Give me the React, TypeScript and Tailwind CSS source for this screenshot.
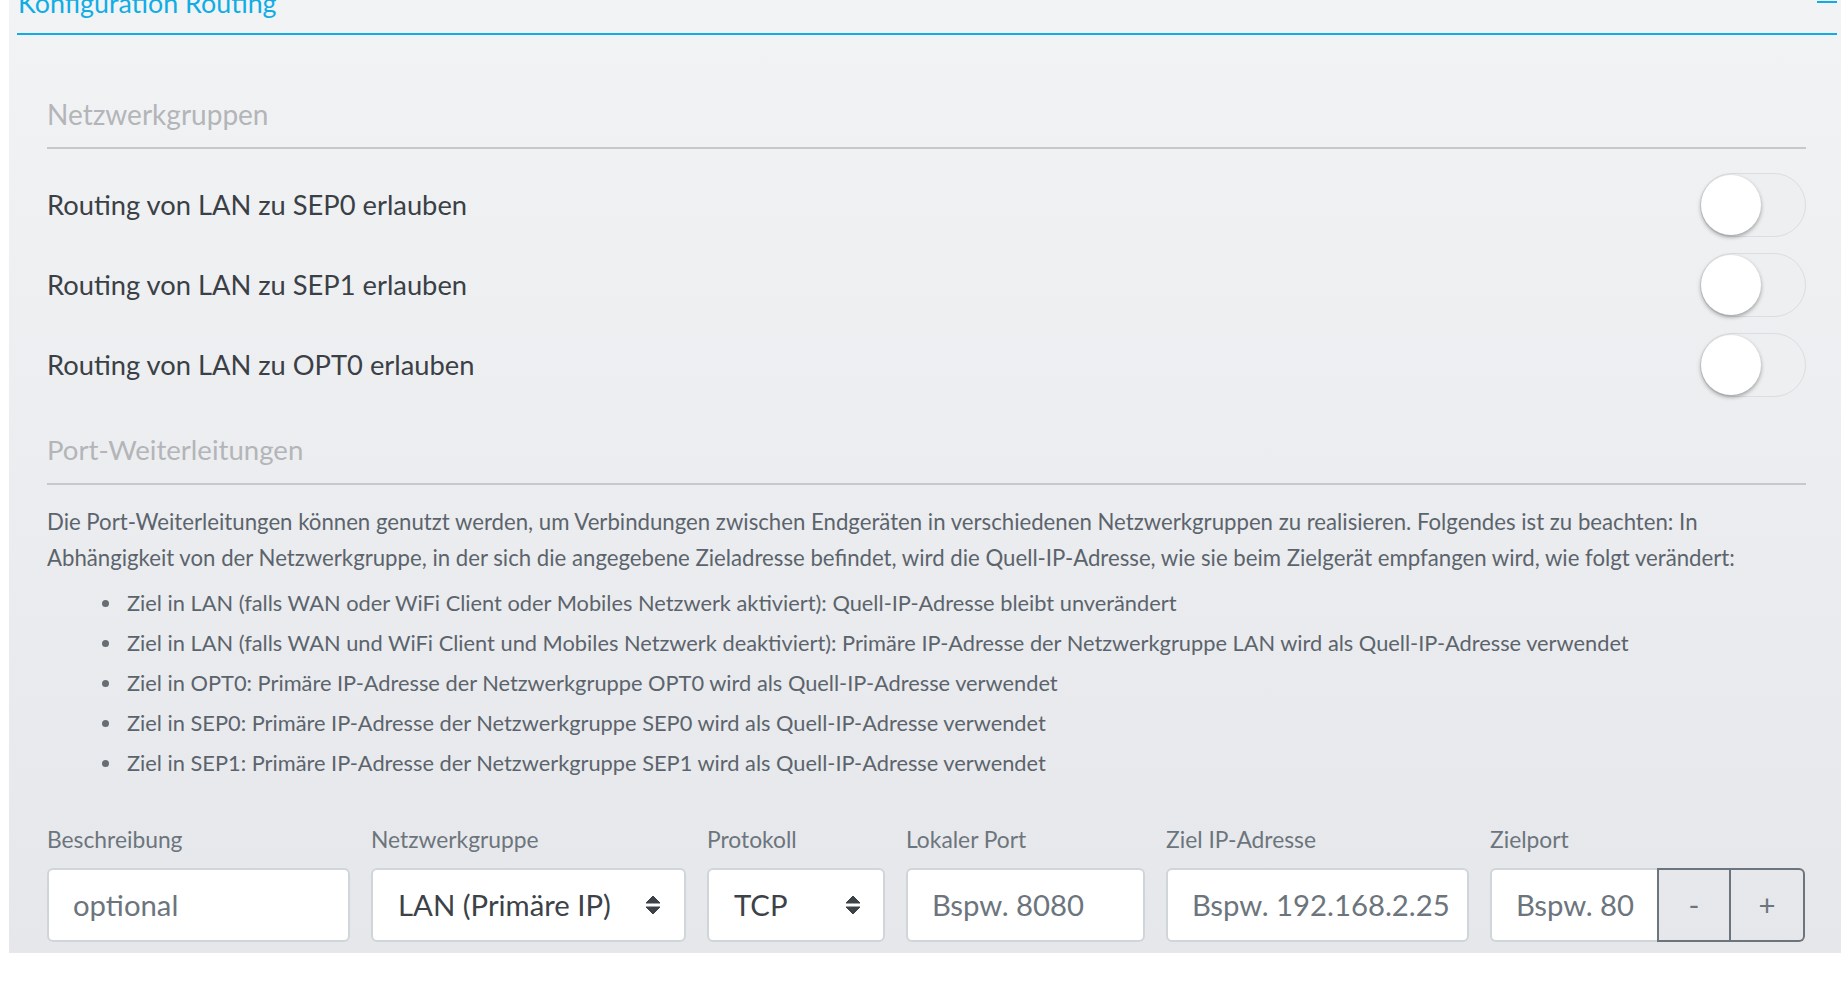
import React from "react";

function Toggle() {
  return (
    <div className="relative w-[106px] h-[64px] rounded-full border-[1.5px] border-[#dcdde0] bg-[#eeeff1] shrink-0">
      <div className="absolute left-[0px] top-[1px] w-[60px] h-[60px] rounded-full bg-white shadow-[0_2px_4px_rgba(0,0,0,0.35)]" />
    </div>
  );
}

function SelectArrows() {
  return (
    <svg width="16" height="20" viewBox="0 0 16 20" className="shrink-0">
      <path d="M1 8 L8 1 L15 8 Z" fill="#3c4247" stroke="#3c4247" strokeWidth="1" strokeLinejoin="round" />
      <path d="M1 12 L15 12 L8 19 Z" fill="#3c4247" stroke="#3c4247" strokeWidth="1" strokeLinejoin="round" />
    </svg>
  );
}

const rows = [
  "Routing von LAN zu SEP0 erlauben",
  "Routing von LAN zu SEP1 erlauben",
  "Routing von LAN zu OPT0 erlauben",
];

const bullets = [
  "Ziel in LAN (falls WAN oder WiFi Client oder Mobiles Netzwerk aktiviert): Quell-IP-Adresse bleibt unverändert",
  "Ziel in LAN (falls WAN und WiFi Client und Mobiles Netzwerk deaktiviert): Primäre IP-Adresse der Netzwerkgruppe LAN wird als Quell-IP-Adresse verwendet",
  "Ziel in OPT0: Primäre IP-Adresse der Netzwerkgruppe OPT0 wird als Quell-IP-Adresse verwendet",
  "Ziel in SEP0: Primäre IP-Adresse der Netzwerkgruppe SEP0 wird als Quell-IP-Adresse verwendet",
  "Ziel in SEP1: Primäre IP-Adresse der Netzwerkgruppe SEP1 wird als Quell-IP-Adresse verwendet",
];

export default function App() {
  return (
    <div className="w-[1841px] h-[981px] bg-white overflow-hidden font-['Lato','Noto_Sans',sans-serif]">
      <div className="ml-[9px] h-[953px] overflow-hidden bg-gradient-to-b from-[#f2f3f5] to-[#e6e7ea]">
        {/* header */}
        <div className="ml-[8px] mr-[4px] h-[35px] flex justify-between items-start border-b-2 border-[#10ade4]">
          <div className="mt-[-10px] ml-[1px] text-[26.8px] leading-[26px] text-[#10ade4] whitespace-nowrap">
            Konfiguration Routing
          </div>
          <div className="mt-[1px] w-[20px] h-[2px] bg-[#10ade4]" />
        </div>

        <div className="pl-[38px] pr-[35px]">
          {/* Netzwerkgruppen */}
          <div className="mt-[62px] pb-[16px] border-b-2 border-[#c6c8cb] text-[28px] leading-[34px] text-[#b3b5b8]">
            Netzwerkgruppen
          </div>
          <div className="mt-[24px] flex flex-col gap-[16px]">
            {rows.map((r) => (
              <div key={r} className="h-[64px] flex items-center justify-between">
                <span className="text-[27.3px] leading-[26px] text-[#3a4045]">{r}</span>
                <Toggle />
              </div>
            ))}
          </div>

          {/* Port-Weiterleitungen */}
          <div className="mt-[36px] pb-[16px] border-b-2 border-[#c6c8cb] text-[27.6px] leading-[34px] text-[#b3b5b8]">
            Port-Weiterleitungen
          </div>
          <div className="mt-[19px] text-[22.2px] leading-[36px] text-[#5b646c]">
            <div className="whitespace-nowrap">
              Die Port-Weiterleitungen können genutzt werden, um Verbindungen zwischen Endgeräten in verschiedenen Netzwerkgruppen zu realisieren. Folgendes ist zu beachten: In
            </div>
            <div className="whitespace-nowrap">
              Abhängigkeit von der Netzwerkgruppe, in der sich die angegebene Zieladresse befindet, wird die Quell-IP-Adresse, wie sie beim Zielgerät empfangen wird, wie folgt verändert:
            </div>
          </div>
          <ul className="mt-[7px] text-[21.8px] leading-[40px] text-[#5b646c]">
            {bullets.map((b) => (
              <li key={b} className="h-[40px] flex items-center whitespace-nowrap">
                <span className="ml-[55px] mr-[18px] w-[7px] h-[7px] rounded-full bg-[#676d73] shrink-0" />
                <span>{b}</span>
              </li>
            ))}
          </ul>

          {/* form row */}
          <div className="mt-[42px] grid grid-cols-[303px_315px_178px_239px_303px_315px] gap-x-[21px]">
            {["Beschreibung", "Netzwerkgruppe", "Protokoll", "Lokaler Port", "Ziel IP-Adresse", "Zielport"].map((l) => (
              <div key={l} className="text-[22.8px] leading-[28px] text-[#6c757d] whitespace-nowrap">
                {l}
              </div>
            ))}
          </div>
          <div className="mt-[15px] grid grid-cols-[303px_315px_178px_239px_303px_315px] gap-x-[21px] text-[29.3px] leading-none">
            <div className="h-[74px] rounded-[6px] border-2 border-[#d0d5da] bg-white flex items-center pl-[24px] text-[#6c757d]">
              optional
            </div>
            <div className="h-[74px] rounded-[6px] border-2 border-[#d0d5da] bg-white flex items-center justify-between pl-[25px] pr-[23px] text-[#3c4247]">
              <span>LAN (Primäre IP)</span>
              <SelectArrows />
            </div>
            <div className="h-[74px] rounded-[6px] border-2 border-[#d0d5da] bg-white flex items-center justify-between pl-[25px] pr-[22px] text-[#3c4247]">
              <span>TCP</span>
              <SelectArrows />
            </div>
            <div className="h-[74px] rounded-[6px] border-2 border-[#d0d5da] bg-white flex items-center pl-[24px] text-[#6c757d]">
              Bspw. 8080
            </div>
            <div className="h-[74px] rounded-[6px] border-2 border-[#d0d5da] bg-white flex items-center pl-[24px] text-[#6c757d] whitespace-nowrap overflow-hidden">
              Bspw. 192.168.2.25
            </div>
            <div className="h-[74px] flex">
              <div className="w-[167px] h-full rounded-l-[6px] border-2 border-r-0 border-[#d0d5da] bg-white flex items-center pl-[24px] text-[#6c757d] whitespace-nowrap">
                Bspw. 80
              </div>
              <div className="w-[74px] h-full border-2 border-[#6c757d] flex items-center justify-center text-[#6c757d]">
                -
              </div>
              <div className="w-[74px] h-full border-2 border-l-0 border-[#6c757d] rounded-r-[6px] flex items-center justify-center text-[#6c757d]">
                +
              </div>
            </div>
          </div>
        </div>
      </div>
    </div>
  );
}
